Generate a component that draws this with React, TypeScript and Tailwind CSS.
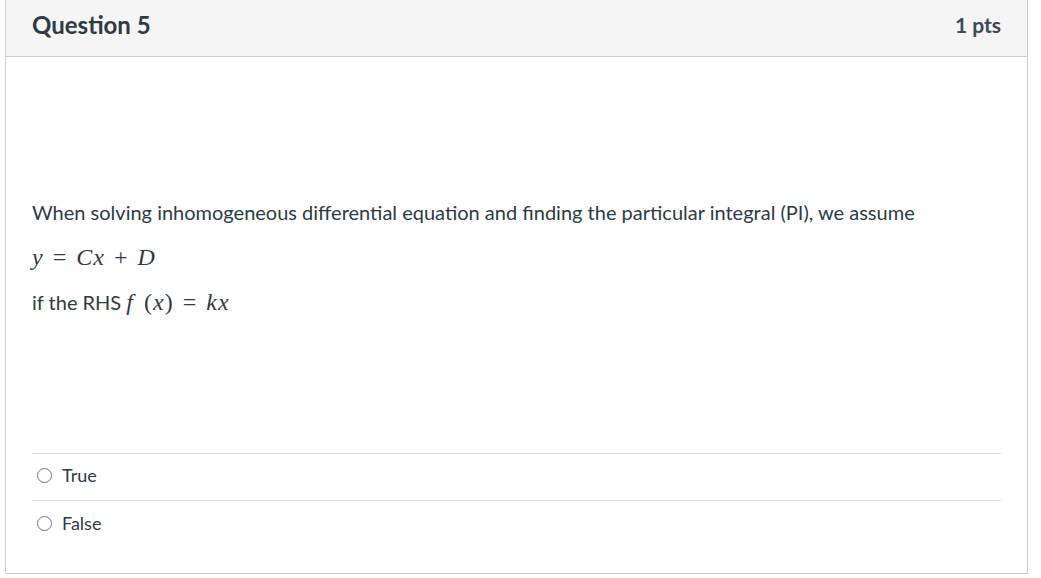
import React from 'react';

const answers = ['True', 'False'];

const mathFont = { fontFamily: '"Liberation Serif", "DejaVu Serif", serif' };

// relation / binary operator with KaTeX-like spacing
const Op = ({ c }: { c: string }) => <span className="mx-[9px] not-italic">{c}</span>;

export default function App() {
  return (
    <div className="w-[1041px] h-[578px] bg-white font-['Lato',sans-serif] text-[#2d3b45]">
      <div className="ml-[5px] w-[1023px] h-[574px] border-x border-b border-[#c7cdd1] flex flex-col">
        {/* Header */}
        <div className="h-[57px] bg-[#f5f5f5] border-b border-[#c7cdd1] flex items-center justify-between pl-[26px] pr-[26px] pb-[6px]">
          <h2 className="text-[24px] font-bold">Question 5</h2>
          <span className="text-[21px] font-bold text-[#394b58]">1 pts</span>
        </div>

        {/* Body */}
        <div className="flex-1 px-[26px] pt-[142px]">
          <p className="text-[20px] leading-[27px] mb-[18px]">
            When solving inhomogeneous differential equation and finding the particular integral (PI), we assume
          </p>
          <p className="text-[24px] leading-[27px] mb-[18px] tracking-[1px]" style={mathFont}>
            <i>y</i>
            <Op c="=" />
            <i>Cx</i>
            <Op c="+" />
            <i>D</i>
          </p>
          <p className="text-[20px] leading-[27px]">
            if the RHS{' '}
            <span className="text-[24px] tracking-[1px]" style={mathFont}>
              <i>f</i> <span className="ml-[3px]">(</span>
              <i>x</i>)
              <Op c="=" />
              <i>kx</i>
            </span>
          </p>

          {/* Answers */}
          <div className="mt-[137px] border-t border-[#dcdfe2]">
            {answers.map((a, i) => (
              <label
                key={a}
                className={`h-[47px] flex items-center gap-[10px] pl-[5px] pb-[3px] ${i === 0 ? 'border-b border-[#dcdfe2]' : ''}`}
              >
                <span className="w-[15px] h-[15px] rounded-full border border-[#6b7780] bg-white" />
                <span className="text-[18px]">{a}</span>
              </label>
            ))}
          </div>
        </div>
      </div>
    </div>
  );
}
